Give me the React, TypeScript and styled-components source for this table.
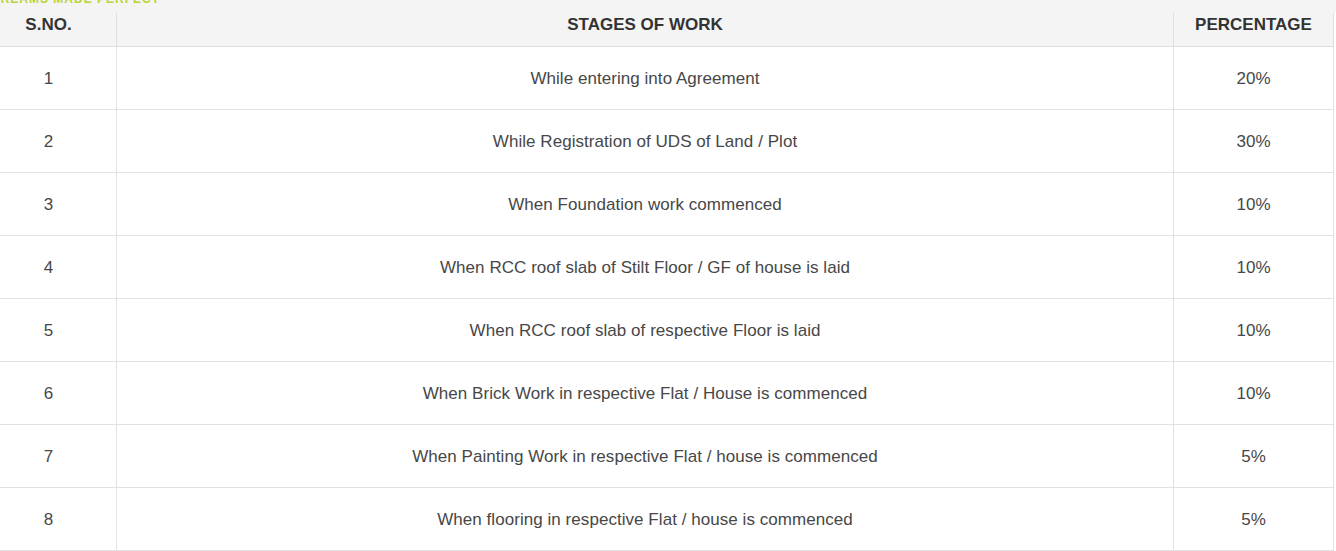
import React from "react";
import styled, { createGlobalStyle } from "styled-components";

const GlobalStyle = createGlobalStyle`
  html, body { margin: 0; padding: 0; background: #ffffff; overflow: hidden; }
  body { font-family: "Liberation Sans", Arial, sans-serif; }
`;

const Page = styled.div`
  position: relative;
  width: 1336px;
  height: 551px;
  overflow: hidden;
  background: #ffffff;
`;

const Tagline = styled.div`
  position: absolute;
  top: -8px;
  left: -9px;
  font-size: 12px;
  line-height: 14px;
  font-weight: 700;
  letter-spacing: 1px;
  color: #bcd33a;
  white-space: nowrap;
  z-index: 2;
`;

const HeaderCover = styled.div`
  position: absolute;
  top: 0;
  left: 0;
  width: 1336px;
  height: 13px;
  background: #f4f4f4;
  z-index: 1;
`;

const Table = styled.table`
  margin-left: -20px;
  margin-top: 0;
  width: 1353px;
  border-collapse: collapse;
  table-layout: fixed;
`;

const HeadCell = styled.th`
  height: 43px;
  padding: 2px 0 0;
  background: #f4f4f4;
  border: 1px solid #dedede;
  font-size: 17px;
  font-weight: 700;
  color: #333333;
  text-align: center;
  vertical-align: middle;
`;

const Cell = styled.td`
  height: 60px;
  padding: 2px 0 0;
  border: 1px solid #e2e2e2;
  font-size: 17px;
  letter-spacing: 0.05px;
  color: #474747;
  text-align: center;
  vertical-align: middle;
`;

const rows: [string, string, string][] = [
  ["1", "While entering into Agreement", "20%"],
  ["2", "While Registration of UDS of Land / Plot", "30%"],
  ["3", "When Foundation work commenced", "10%"],
  ["4", "When RCC roof slab of Stilt Floor / GF of house is laid", "10%"],
  ["5", "When RCC roof slab of respective Floor is laid", "10%"],
  ["6", "When Brick Work in respective Flat / House is commenced", "10%"],
  ["7", "When Painting Work in respective Flat / house is commenced", "5%"],
  ["8", "When flooring in respective Flat / house is commenced", "5%"],
];

export default function App() {
  return (
    <Page>
      <GlobalStyle />
      <HeaderCover />
      <Tagline>DREAMS MADE PERFECT</Tagline>
      <Table>
        <colgroup>
          <col style={{ width: "136px" }} />
          <col style={{ width: "1057px" }} />
          <col style={{ width: "160px" }} />
        </colgroup>
        <thead>
          <tr>
            <HeadCell>S.NO.</HeadCell>
            <HeadCell>STAGES OF WORK</HeadCell>
            <HeadCell>PERCENTAGE</HeadCell>
          </tr>
        </thead>
        <tbody>
          {rows.map(([n, stage, pct]) => (
            <tr key={n}>
              <Cell>{n}</Cell>
              <Cell>{stage}</Cell>
              <Cell>{pct}</Cell>
            </tr>
          ))}
        </tbody>
      </Table>
    </Page>
  );
}
